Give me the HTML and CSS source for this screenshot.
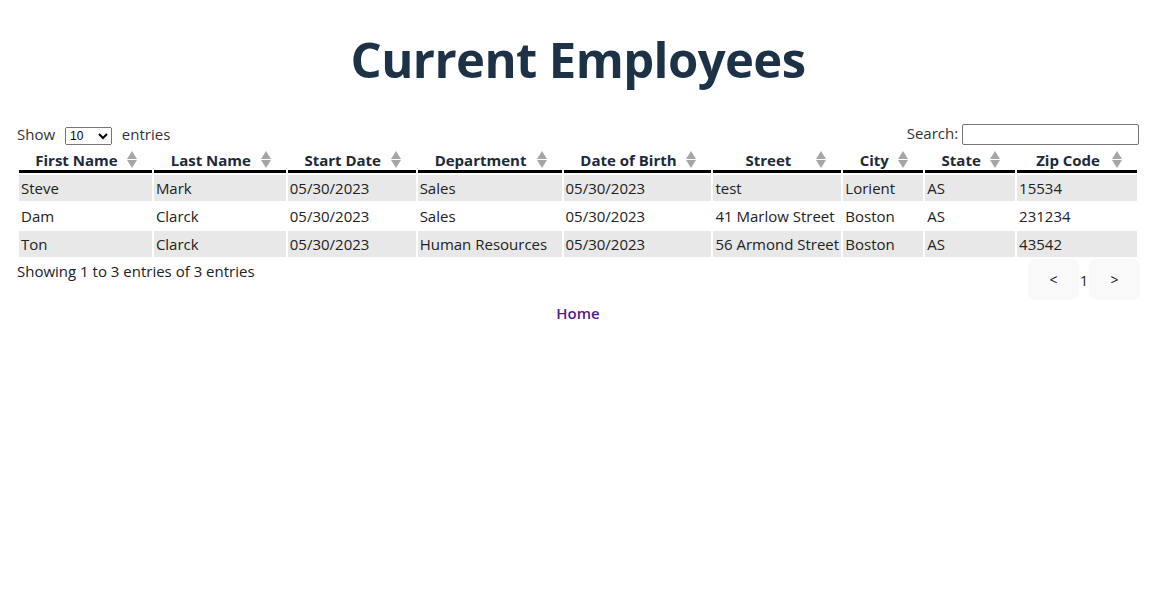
FILE: index.html
```html
<!DOCTYPE html>
<html>
<head>
<meta charset="utf-8">
<link rel="stylesheet" href="styles.css">
</head>
<body>
<div class="page">
  <h1 class="title">Current Employees</h1>
  <div class="controls">
    <label class="length">Show
      <select class="length-select"><option>10</option><option>25</option></select>
      entries</label>
    <label class="search">Search: <input class="search-input" type="text"></label>
  </div>
  <table class="table">
    <colgroup>
      <col class="c1"><col class="c2"><col class="c3"><col class="c4"><col class="c5"><col class="c6"><col class="c7"><col class="c8"><col class="c9">
    </colgroup>
    <thead>
      <tr>
        <th>First Name<span class="sort"></span></th>
        <th>Last Name<span class="sort"></span></th>
        <th>Start Date<span class="sort"></span></th>
        <th>Department<span class="sort"></span></th>
        <th>Date of Birth<span class="sort"></span></th>
        <th>Street<span class="sort"></span></th>
        <th>City<span class="sort"></span></th>
        <th>State<span class="sort"></span></th>
        <th>Zip Code<span class="sort"></span></th>
      </tr>
    </thead>
    <tbody>
      <tr class="odd"><td>Steve</td><td>Mark</td><td>05/30/2023</td><td>Sales</td><td>05/30/2023</td><td>test</td><td>Lorient</td><td>AS</td><td>15534</td></tr>
      <tr><td>Dam</td><td>Clarck</td><td>05/30/2023</td><td>Sales</td><td>05/30/2023</td><td>41 Marlow Street</td><td>Boston</td><td>AS</td><td>231234</td></tr>
      <tr class="odd"><td>Ton</td><td>Clarck</td><td>05/30/2023</td><td>Human Resources</td><td>05/30/2023</td><td>56 Armond Street</td><td>Boston</td><td>AS</td><td>43542</td></tr>
    </tbody>
  </table>
  <div class="footer">
    <div class="info">Showing 1 to 3 entries of 3 entries</div>
    <div class="pager">
      <button class="pbtn">&lt;</button>
      <span class="pnum">1</span>
      <button class="pbtn">&gt;</button>
    </div>
  </div>
  <div class="home"><a class="home-link" href="#">Home</a></div>
</div>
</body>
</html>
```
FILE: styles.css
```css
html, body {
  margin: 0;
  padding: 0;
  background: #fff;
}
body {
  font-family: "Open Sans", "Noto Sans", sans-serif;
  font-size: 15px;
  color: #222;
}
.page {
  margin-right: 18px;
  padding: 0 17px;
}
.title {
  margin: 0;
  padding-top: 28px;
  height: 85px;
  box-sizing: border-box;
  text-align: center;
  font-size: 49px;
  line-height: 62px;
  font-weight: 700;
  color: #1d3246;
  letter-spacing: -0.6px;
}
.controls {
  margin-top: 38px;
  display: flex;
  justify-content: space-between;
  align-items: center;
  height: 22px;
}
.length, .search {
  font-size: 15px;
  color: #333;
}
.length-select {
  margin: 0 6px 0 6px;
  font-size: 12px;
  height: 18px;
  width: 47px;
}
.search-input {
  width: 171px;
  height: 17px;
  border: 1px solid #767676;
  border-radius: 2px;
  padding: 1px 2px;
}
.table {
  width: 100%;
  border-spacing: 2px;
  margin-top: 1px;
  font-size: 15px;
}
.c1 { width: 133px; } .c2 { width: 132px; } .c3 { width: 128px; }
.c4 { width: 144px; } .c5 { width: 148px; } .c6 { width: 128px; }
.c7 { width: 80px; } .c8 { width: 90px; } .c9 { width: 120px; }
.table th {
  position: relative;
  font-weight: 700;
  color: #1d2a3a;
  text-align: center;
  padding: 3px 28px 0 10px;
  height: 19px;
  line-height: 19px;
  border-bottom: 3px solid #000;
  white-space: nowrap;
}
.sort {
  position: absolute;
  right: 15px;
  top: 3px;
  width: 10px;
  height: 17px;
}
.sort::before, .sort::after {
  content: "";
  position: absolute;
  left: 0;
  border-left: 5px solid transparent;
  border-right: 5px solid transparent;
}
.sort::before {
  top: 0;
  border-bottom: 8px solid #a6a6a6;
}
.sort::after {
  bottom: 0;
  border-top: 8px solid #a6a6a6;
}
.table td {
  height: 26px;
  padding: 0 2px;
  white-space: nowrap;
  color: #222;
}
.odd td {
  background: #e8e8e8;
}
.footer {
  display: flex;
  justify-content: space-between;
  align-items: flex-start;
}
.info {
  margin-top: 2px;
  font-size: 15px;
  color: #222;
}
.pager {
  display: flex;
  align-items: center;
  margin-top: 0;
  margin-right: -1px;
}
.pbtn {
  width: 51px;
  height: 41px;
  border: none;
  border-radius: 8px;
  background: #f9f9f9;
  font-family: inherit;
  font-size: 14px;
  color: #111;
  padding: 0;
}
.pnum {
  width: 10px;
  text-align: center;
  font-size: 15px;
  color: #1d2a3a;
}
.home {
  text-align: center;
  margin-top: 3px;
}
.home-link {
  color: #551a8b;
  font-weight: 600;
  font-size: 15px;
  text-decoration: none;
}
```
